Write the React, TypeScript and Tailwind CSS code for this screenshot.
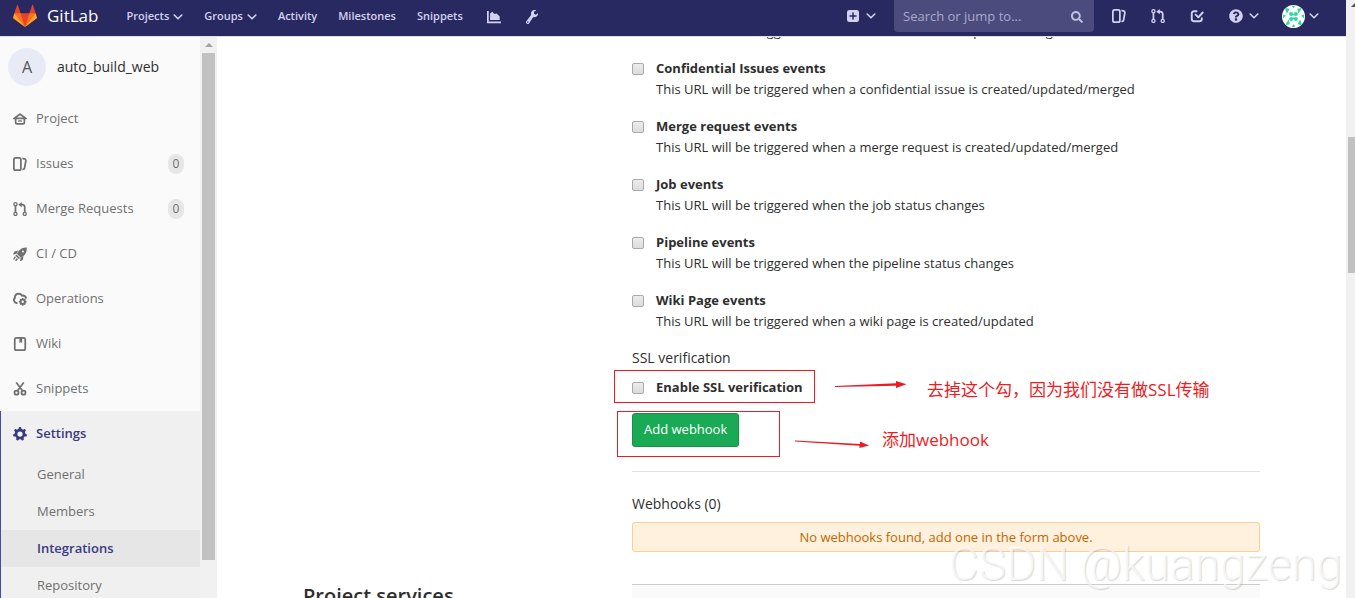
import type { ReactNode } from 'react'
import { FaSearch, FaQuestionCircle } from 'react-icons/fa'

function ChevronDown() {
  return (
    <svg width="10" height="6" viewBox="0 0 10 6" fill="none" stroke="currentColor" strokeWidth="1.6" strokeLinecap="round" strokeLinejoin="round">
      <path d="M1.2 1l3.8 3.8L8.8 1" />
    </svg>
  )
}

function Tanuki() {
  return (
    <svg width="24" height="24" viewBox="0 0 36 36">
      <path fill="#e24329" d="M2 14l9.38 9v-9l-4-12.28c-.205-.632-1.176-.632-1.38 0z" />
      <path fill="#e24329" d="M34 14l-9.38 9v-9l4-12.28c.205-.632 1.176-.632 1.38 0z" />
      <path fill="#e24329" d="M18 34.38L3 14h30z" />
      <path fill="#fc6d26" d="M18 34.38L11.38 14H2l4 11z" />
      <path fill="#fc6d26" d="M18 34.38L24.62 14H34l-4 11z" />
      <path fill="#fca326" d="M2 14L.1 20.16c-.18.565 0 1.2.5 1.56l17.42 12.66z" />
      <path fill="#fca326" d="M34 14l1.9 6.16c.18.565 0 1.2-.5 1.56L18 34.38z" />
    </svg>
  )
}

function Icon({ children, size = 14 }: { children: ReactNode; size?: number }) {
  return (
    <svg width={size} height={size} viewBox="0 0 16 16" fill="currentColor" className="shrink-0">
      {children}
    </svg>
  )
}

const issuesIcon = (
  <path d="M10.458 15.012l.311.055a3 3 0 0 0 3.476-2.433l1.389-7.879A3 3 0 0 0 13.2 1.28L11.23.933a3.002 3.002 0 0 0-.824-.031c.364.59.58 1.28.593 2.02l1.854.328a1 1 0 0 1 .811 1.158l-1.389 7.879a1 1 0 0 1-1.158.81l-.118-.02a3.98 3.98 0 0 1-.541 1.935zM3 0h4a3 3 0 0 1 3 3v10a3 3 0 0 1-3 3H3a3 3 0 0 1-3-3V3a3 3 0 0 1 3-3zm0 2a1 1 0 0 0-1 1v10a1 1 0 0 0 1 1h4a1 1 0 0 0 1-1V3a1 1 0 0 0-1-1H3z" />
)

const mergeIcon = (
  <g fill="none" stroke="currentColor" strokeWidth="1.5">
    <circle cx="2.800" cy="2.600" r="1.800" />
    <circle cx="2.800" cy="13.600" r="1.800" />
    <circle cx="13.400" cy="13.600" r="1.800" />
    <path d="M2.800 4.400v7.400" strokeWidth="2" />
    <path d="M13.400 11.800V5.500a2.500 2.500 0 0 0-2.500-2.500H9" strokeWidth="2" />
    <path d="M10 0v6L6 3z" fill="currentColor" stroke="none" />
  </g>
)

const homeIcon = (
  <path fillRule="evenodd" d="M8 1.2l7.6 5.6c.6.5.3 1.5-.5 1.5H14V12a2.5 2.5 0 0 1-2.5 2.5h-7A2.5 2.5 0 0 1 2 12V8.300H.9c-.8 0-1.100-1-.5-1.500zM8 3.700L4.500 6.300h7zM4 8.300V12c0 .3.200.5.500.5h7c.3 0 .5-.2.5-.5V8.300zM6 9.500h4v2H9a1 1 0 0 0-2 0H6z" />
)

const rocketIcon = (
  <g>
    <path fillRule="evenodd" d="M15.700.700c.3 3.600-.7 6.600-3.200 9.100-1 1-2.200 1.900-3.500 2.500L4.500 7.800c.6-1.500 1.400-2.700 2.400-3.700C9.300 1.700 12.200.5 15.700.700zM11.300 6.300a1.200 1.200 0 1 0 0-2.400 1.200 1.200 0 0 0 0 2.400z" />
    <path d="M6 4L1.600 5.200 0 8.500l3.700-.6zM12.200 10.700l-1.200 4.300-3 1.300.6-3.700zM4 8.500l4 4-1.300 1.200-4-3.800zM2.200 10.600l1.200 1.200-2.200 2.800-1.200-.5zM4.400 12.600l1.400 1.400-2.400 2.300-1.100-.9z" />
  </g>
)

const cloudGearIcon = (
  <g>
    <path d="M4.200 12.600A3.500 3.500 0 0 1 2.200 6.600C2 3.500 4 1.900 6.400 1.900c2 0 3.100.9 3.800 2.200 2.500-.4 4.400 1 4.600 2.700" fill="none" stroke="currentColor" strokeWidth="2.200" strokeLinecap="round" />
    <path fillRule="evenodd" d="M10.300 6.800h1.600l.4 1.300 1.200-.5 1.200 1.200-.5 1.200 1.300.4V12l-1.300.4.5 1.200-1.200 1.200-1.200-.5-.4 1.300h-1.600l-.4-1.300-1.200.5-1.200-1.200.5-1.200-1.300-.4v-1.600l1.300-.4-.5-1.200 1.200-1.200 1.200.5zM11.100 12.600a1.400 1.400 0 1 0 0-2.800 1.400 1.400 0 0 0 0 2.800z" />
  </g>
)

const bookIcon = (
  <path fillRule="evenodd" d="M4 0h8a3 3 0 0 1 3 3v10a3 3 0 0 1-3 3H4a3 3 0 0 1-3-3V3a3 3 0 0 1 3-3zm0 2a1 1 0 0 0-1 1v10a1 1 0 0 0 1 1h8a1 1 0 0 0 1-1V3a1 1 0 0 0-1-1h-1.500v5L9 5.700 7.300 7V2z" />
)

const scissorsIcon = (
  <g fill="none" stroke="currentColor" strokeWidth="2">
    <circle cx="4" cy="12.200" r="2.300" />
    <circle cx="12" cy="12.200" r="2.300" />
    <path d="M4.200 1.200L10.800 10M11.800 1.200L5.200 10" strokeLinecap="round" />
  </g>
)

const gearIcon = (
  <path d="M2.415 5.803L1.317 4.084A.5.5 0 0 1 1.35 3.5l.805-.994a.5.5 0 0 1 .564-.153l1.878.704a5.975 5.975 0 0 1 1.65-.797L6.885.342A.5.5 0 0 1 7.36 0h1.28a.5.5 0 0 1 .474.342l.639 1.918a5.97 5.97 0 0 1 1.65.797l1.877-.704a.5.5 0 0 1 .565.153l.805.994a.5.5 0 0 1 .032.584l-1.097 1.719c.217.551.354 1.143.399 1.76l1.731 1.058a.5.5 0 0 1 .227.54l-.288 1.246a.5.5 0 0 1-.44.385l-2.008.19a6.026 6.026 0 0 1-1.142 1.431l.265 1.995a.5.5 0 0 1-.277.516l-1.15.56a.5.5 0 0 1-.576-.1l-1.424-1.452a6.047 6.047 0 0 1-1.804 0l-1.425 1.453a.5.5 0 0 1-.576.1l-1.15-.561a.5.5 0 0 1-.276-.516l.265-1.995a6.026 6.026 0 0 1-1.143-1.43l-2.008-.191a.5.5 0 0 1-.44-.385L.058 9.16a.5.5 0 0 1 .226-.539l1.732-1.058a5.968 5.968 0 0 1 .399-1.76zM8 11a3 3 0 1 0 0-6 3 3 0 0 0 0 6z" />
)

const plusSquareIcon = (
  <path fillRule="evenodd" d="M3 0h10a3 3 0 0 1 3 3v10a3 3 0 0 1-3 3H3a3 3 0 0 1-3-3V3a3 3 0 0 1 3-3zm4 7H4a1 1 0 0 0 0 2h3v3a1 1 0 0 0 2 0V9h3a1 1 0 0 0 0-2H9V4a1 1 0 0 0-2 0z" />
)

const todoIcon = (
  <g fill="none" stroke="currentColor" strokeWidth="2.200" strokeLinecap="round" strokeLinejoin="round">
    <path d="M7.500 2.500H4.500A2.500 2.500 0 0 0 2 5v6.500A2.500 2.500 0 0 0 4.500 14H11a2.500 2.500 0 0 0 2.500-2.500v-1" />
    <path d="M6.500 6.500l3 3L14.500 4" />
  </g>
)

const chartIcon = (
  <g>
    <path d="M0 1h2v12h14v2H0z" />
    <path d="M3.500 11.500V4l2.500-2 2.500 2.500L11 4l3.500 3.500v4z" />
  </g>
)

const wrenchIcon = (
  <path fillRule="evenodd" d="M14.800 3.800l-2.600 1.500-1.900-1.100V2l2.600-1.500C11.200-.3 9 .1 7.800 1.500 6.700 2.700 6.600 4.200 7 5.700L1.700 12.500a2 2 0 0 0 .2 2.900 2 2 0 0 0 2.900-.4l4.400-6.800c1.600.3 3.200-.1 4.400-1.200 1-.9 1.500-2 1.200-3.200zM3.200 14.500a.8.8 0 1 1 0-1.600.8.8 0 0 1 0 1.600z" />
)

function Identicon() {
  return (
    <svg width="23" height="23" viewBox="0 0 24 24">
      <defs>
        <clipPath id="round">
          <circle cx="12" cy="12" r="12" />
        </clipPath>
      </defs>
      <g clipPath="url(#round)">
        <rect width="24" height="24" fill="#fff" />
        <g fill="#2fd89b">
          <circle cx="9.500" cy="9.500" r="2.100" />
          <circle cx="14.500" cy="9.500" r="2.100" />
          <circle cx="9.500" cy="14.500" r="2.100" />
          <circle cx="14.500" cy="14.500" r="2.100" />
          <path d="M11 9h2v2h-2zM11 13h2v2h-2z" />
          <path d="M3 3l5 1-3 5-1-3zM10 1h4l-2 2zM21 3l-4 6-1-5zM1 10l3 1-3 3zM23 10l-3 1 3 3zM3 21l4-6 1 5zM21 21l-5-1 3-5zM10 23l2-3 2 3z" />
        </g>
      </g>
    </svg>
  )
}

const navLinks = [
  { name: 'Projects', menu: true },
  { name: 'Groups', menu: true },
  { name: 'Activity' },
  { name: 'Milestones' },
  { name: 'Snippets' },
]

const sideLinks = [
  { name: 'Project', icon: homeIcon },
  { name: 'Issues', icon: issuesIcon, count: 0 },
  { name: 'Merge Requests', icon: mergeIcon, count: 0 },
  { name: 'CI / CD', icon: rocketIcon },
  { name: 'Operations', icon: cloudGearIcon },
  { name: 'Wiki', icon: bookIcon },
  { name: 'Snippets', icon: scissorsIcon },
]

const settingsLinks = ['General', 'Members', 'Integrations', 'Repository']

const triggers = [
  { id: 'issues', title: 'Issues events', text: 'This URL will be triggered when an issue is created/updated/merged' },
  { id: 'confidential', title: 'Confidential Issues events', text: 'This URL will be triggered when a confidential issue is created/updated/merged' },
  { id: 'merge', title: 'Merge request events', text: 'This URL will be triggered when a merge request is created/updated/merged' },
  { id: 'job', title: 'Job events', text: 'This URL will be triggered when the job status changes' },
  { id: 'pipeline', title: 'Pipeline events', text: 'This URL will be triggered when the pipeline status changes' },
  { id: 'wiki', title: 'Wiki Page events', text: 'This URL will be triggered when a wiki page is created/updated' },
]

function Checkbox({ id }: { id: string }) {
  return (
    <input
      id={id}
      type="checkbox"
      className="size-3 shrink-0 appearance-none rounded-xs border border-[#a9a9a9] bg-linear-to-b from-[#ececec] to-[#dcdcdc]"
    />
  )
}

function Header() {
  return (
    <header className="flex h-[37px] shrink-0 items-start border-b border-[#dfdfe8] bg-[#292961] pr-[27px] pl-[13px] text-[#d1d1f0]">
      <a href="#" className="flex h-8 items-center gap-[10px] text-[17px] text-white">
        <Tanuki />
        GitLab
      </a>
      <nav className="ml-7 flex h-[33px] items-center gap-[21px] text-[11px] font-semibold">
        {navLinks.map((link) => (
          <a key={link.name} href="#" className="flex items-center gap-1">
            {link.name}
            {link.menu && <ChevronDown />}
          </a>
        ))}
        <a href="#" aria-label="Analytics" className="px-[3px]"><Icon>{chartIcon}</Icon></a>
        <a href="#" aria-label="Admin"><Icon>{wrenchIcon}</Icon></a>
      </nav>
      <div className="ml-auto flex h-8 items-center">
        <button aria-label="New" className="flex items-center gap-[7px]">
          <Icon size={12}>{plusSquareIcon}</Icon>
          <ChevronDown />
        </button>
        <label className="ml-[18px] flex h-8 w-[200px] items-center rounded-b bg-[#4b4b7d] pt-[2px] pr-[11px] pl-[9px]">
          <input
            type="text"
            aria-label="Search"
            placeholder="Search or jump to..."
            className="w-full min-w-0 bg-transparent text-[13px] placeholder:text-[#a9a9cc]"
          />
          <FaSearch className="size-3 shrink-0 text-[#c0c0e0]" />
        </label>
        <div className="ml-[18px] flex items-center gap-[25px]">
          <a href="#" aria-label="Issues"><Icon>{issuesIcon}</Icon></a>
          <a href="#" aria-label="Merge requests"><Icon>{mergeIcon}</Icon></a>
          <a href="#" aria-label="Todos"><Icon>{todoIcon}</Icon></a>
          <button aria-label="Help" className="flex items-center gap-[6px]">
            <FaQuestionCircle className="size-[14px]" />
            <ChevronDown />
          </button>
        </div>
        <button aria-label="Account" className="ml-[23px] flex items-center gap-1">
          <Identicon />
          <ChevronDown />
        </button>
      </div>
    </header>
  )
}

function Sidebar() {
  return (
    <aside className="flex w-[217px] shrink-0 overflow-hidden">
      <div className="w-[200px] bg-[#fafafa] text-[#707070]">
        <a href="#" className="flex h-[59px] items-center gap-[11px] pl-2 text-sm font-medium text-[#2e2e2e]">
          <span className="flex size-[38px] items-center justify-center rounded-full bg-[#e8eaf6] text-base text-[#555]">A</span>
          auto_build_web
        </a>
        <ul>
          {sideLinks.map((link) => (
            <li key={link.name}>
              <a href="#" className="flex h-[45px] items-center gap-[9px] pr-4 pl-[13px]">
                <Icon>{link.icon}</Icon>
                {link.name}
                {link.count !== undefined && (
                  <span className="ml-auto flex h-5 w-4 items-center justify-center rounded-full bg-[#e6e6e6] text-xs">{link.count}</span>
                )}
              </a>
            </li>
          ))}
          <li className="h-80 border-l border-[#4b4ba3] bg-[#f0f0f0]">
            <a href="#" className="flex h-[45px] items-center gap-[9px] pl-3 font-semibold text-[#393982]">
              <Icon>{gearIcon}</Icon>
              Settings
            </a>
            {settingsLinks.map((name) => (
              <a
                key={name}
                href="#"
                className={
                  name === 'Integrations'
                    ? 'flex h-[37px] items-center bg-[#e6e6e6] pl-9 font-semibold text-[#393982]'
                    : 'flex h-[37px] items-center pl-9'
                }
              >
                {name}
              </a>
            ))}
          </li>
        </ul>
      </div>
      <div className="flex w-[17px] flex-col items-center bg-[#f1f1f1]">
        <svg width="8" height="16" viewBox="0 0 8 16" fill="#a3a3a3">
          <path d="M4 6l4 4H0z" />
        </svg>
        <div className="h-[507px] w-[13px] bg-[#c1c1c1]" />
      </div>
    </aside>
  )
}

function Webhooks() {
  return (
    <section className="flex">
      <div className="w-[329px] shrink-0" />
      <form className="min-w-0 grow">
        <ul className="-mt-[37px]">
          {triggers.map((item) => (
            <li key={item.id} className="mb-4 pl-6 leading-[21px]">
              <div className="-ml-6 flex items-center gap-3">
                <Checkbox id={item.id} />
                <label htmlFor={item.id} className="font-bold">{item.title}</label>
              </div>
              <p>{item.text}</p>
            </li>
          ))}
        </ul>
        <p className="text-sm leading-5 font-medium">SSL verification</p>
        <div className="relative mt-[9px] flex h-[21px] items-center gap-3">
          <Checkbox id="ssl" />
          <label htmlFor="ssl" className="font-bold">Enable SSL verification</label>
          <div className="absolute -top-[7px] -left-[18px] h-[33px] w-[201px] border border-[#ed1c24]" />
          <div className="absolute top-1 left-[203px] flex items-start gap-[18px] whitespace-nowrap text-[#ed1c24]">
            <svg width="74" height="10" viewBox="0 0 74 10" fill="#ed1c24">
              <path d="M0 5L61 2.200V0L71.500 3.300 61 7V4.800L0 6z" />
            </svg>
            <span className="text-[17px] leading-[18px]">去掉这个勾，因为我们没有做SSL传输</span>
          </div>
        </div>
        <div className="relative mt-[15px] flex">
          <button type="button" className="h-[34px] rounded-[3px] border border-[#168f48] bg-[#1aaa55] px-[11px] text-white">
            Add webhook
          </button>
          <div className="absolute -top-[2px] -left-[15px] h-[46px] w-[163px] border border-[#ed1c24]" />
          <div className="absolute top-[19px] left-[163px] flex items-end gap-[13px] whitespace-nowrap text-[#ed1c24]">
            <svg width="74" height="10" viewBox="0 0 74 10" fill="#ed1c24">
              <path d="M0 2.500L65 6V3.600L74 7.500 64.500 10V7.800L0 3.500z" />
            </svg>
            <span className="text-[17px] leading-4">添加webhook</span>
          </div>
        </div>
        <hr className="mt-6 border-[#e1e1e1]" />
        <h5 className="mt-[21px] text-sm leading-[21px] font-medium">Webhooks (0)</h5>
        <p className="mt-2 rounded-[3px] border border-[#fdcf94] bg-[#fff1de] text-center leading-7 text-[#c26700]">
          No webhooks found, add one in the form above.
        </p>
      </form>
    </section>
  )
}

export default function App() {
  return (
    <div className="flex h-screen overflow-hidden bg-white font-['Open_Sans','Noto_Sans_CJK_SC',sans-serif] text-[13px] text-[#2e2e2e]">
      <div className="flex min-w-0 grow flex-col">
        <Header />
        <div className="flex min-h-0 grow">
          <Sidebar />
          <main className="relative min-w-0 grow overflow-hidden">
            <div className="mx-auto max-w-[957px]">
              <Webhooks />
              <section className="mt-8 flex">
                <h4 className="w-[329px] shrink-0 text-xl leading-6 font-semibold">Project services</h4>
                <div className="h-20 grow border-t border-[#ccc] bg-[#fafafa]" />
              </section>
            </div>
            <div className="absolute right-1 bottom-2 font-['Roboto',sans-serif] text-[46px] leading-[52px] font-light text-white/70 [text-shadow:1px_1px_1px_rgba(0,0,0,0.15)]">
              CSDN @kuangzeng
            </div>
          </main>
        </div>
      </div>
      <div className="flex w-[9px] shrink-0 flex-col bg-[#f1f1f1] pl-[2px]">
        <svg width="7" height="17" viewBox="0 0 7 17" fill="#505050">
          <path d="M7 3v4H3z" />
        </svg>
        <div className="mt-[120px] h-[136px] bg-[#c1c1c1]" />
      </div>
    </div>
  )
}
